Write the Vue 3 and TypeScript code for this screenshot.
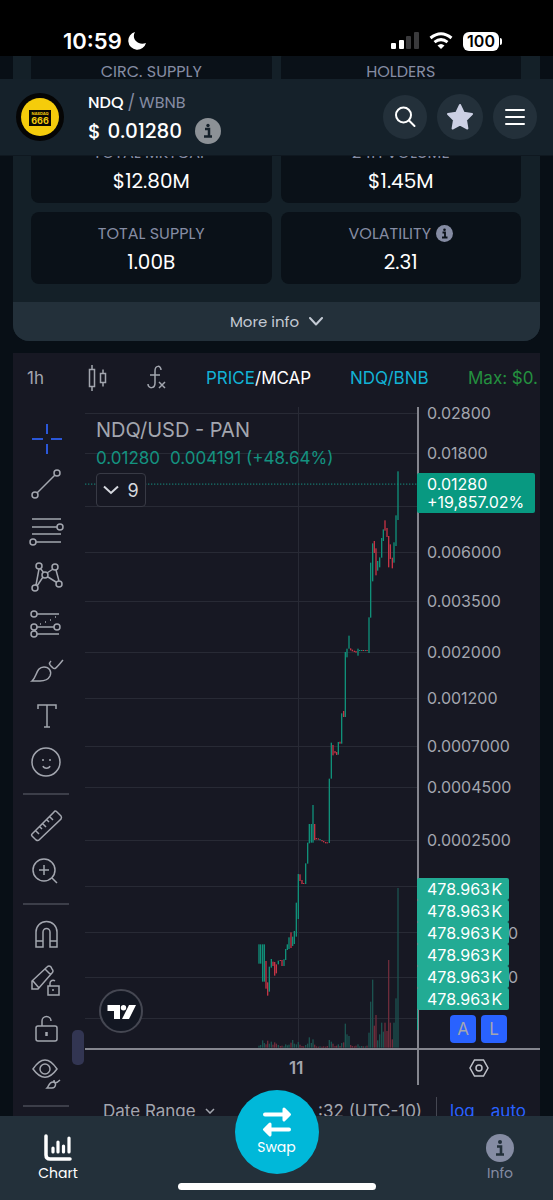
<script setup lang="ts">
import { computed, ref } from 'vue'

type Bar = [x: number, top: number, bottom: number, down?: 1]

const mode = ref<'price' | 'mcap'>('price')

const stats = [
  { label: 'CIRC. SUPPLY', value: '', info: false },
  { label: 'HOLDERS', value: '', info: false },
  { label: 'TOTAL MKTCAP', value: '$12.80M', info: false },
  { label: '24H VOLUME', value: '$1.45M', info: false },
  { label: 'TOTAL SUPPLY', value: '1.00B', info: false },
  { label: 'VOLATILITY', value: '2.31', info: true },
]

const gridY = [413, 453, 506, 552, 601, 652, 698, 746, 787, 840, 886, 932, 977, 1018].map((y) => y - 407)

const axisLabels = [
  { y: 413, text: '0.02800' },
  { y: 453, text: '0.01800' },
  { y: 552, text: '0.006000' },
  { y: 601, text: '0.003500' },
  { y: 652, text: '0.002000' },
  { y: 698, text: '0.001200' },
  { y: 746, text: '0.0007000' },
  { y: 787, text: '0.0004500' },
  { y: 840, text: '0.0002500' },
].map((l) => ({ ...l, y: l.y - 401 }))

// Last digits of the long labels that stick out beside the volume tags.
const coveredLabels = [532, 576]

const volumeTags = [0, 1, 2, 3, 4, 5].map((i) => 471 + i * 22)

const bars: Bar[] = [
  [57, 1612, 1670], [62, 1612, 1670], [68, 1612, 1724], [73, 1612, 1724], [78, 1662, 1745, 1],
  [83, 1726, 1766, 1], [88, 1679, 1754], [94, 1656, 1682], [99, 1664, 1677, 1], [104, 1665, 1706, 1],
  [109, 1672, 1699, 1], [115, 1661, 1672], [121, 1659, 1662, 1], [126, 1659, 1677, 1], [132, 1657, 1677],
  [137, 1626, 1659], [142, 1612, 1629], [147, 1591, 1626], [153, 1576, 1623, 1], [158, 1589, 1617],
  [163, 1572, 1611], [169, 1487, 1589], [175, 1401, 1536], [180, 1402, 1422, 1], [186, 1419, 1431, 1],
  [191, 1428, 1431, 1], [197, 1369, 1431], [203, 1307, 1370], [208, 1251, 1309], [214, 1251, 1307],
  [219, 1194, 1307], [224, 1251, 1299, 1], [229, 1293, 1297, 1], [235, 1294, 1298, 1], [240, 1296, 1300],
  [246, 1299, 1303, 1], [251, 1302, 1306, 1], [257, 1305, 1309, 1], [262, 1306, 1309, 1], [268, 1115, 1308],
  [274, 1007, 1115], [279, 1014, 1045, 1], [285, 1032, 1039, 1], [290, 1035, 1044, 1], [295, 1005, 1043],
  [300, 1004, 1010, 1], [305, 919, 1010], [311, 912, 930, 1], [316, 735, 930], [321, 725, 751],
  [327, 686, 725], [332, 724, 730, 1], [337, 728, 733, 1], [343, 731, 735, 1], [348, 732, 737, 1],
  [354, 725, 746], [359, 729, 732], [365, 729, 732], [370, 729, 732, 1], [376, 729, 732],
  [381, 729, 732, 1], [387, 631, 738], [392, 467, 632], [398, 409, 523], [403, 402, 438, 1],
  [408, 424, 505, 1], [413, 462, 491], [419, 451, 481], [425, 393, 452], [430, 367, 402],
  [435, 340, 371, 1], [441, 363, 390, 1], [446, 387, 481, 1], [451, 412, 456, 1], [457, 452, 484, 1],
  [462, 406, 467], [468, 325, 417], [474, 193, 339],
]

const volumes = [
  6, 8, 22, 14, 10, 21, 12, 18, 9, 16, 12, 8, 5, 6, 4, 10, 7, 9, 15, 23, 12, 10, 17, 9, 5, 4, 8, 12, 31, 14, 25, 9,
  4, 3, 4, 3, 4, 3, 5, 23, 18, 12, 5, 6, 10, 5, 14, 16, 72, 40, 35, 8, 5, 4, 6, 10, 4, 5, 4, 4, 6, 45, 138, 204,
  66, 98, 22, 40, 75, 48, 75, 50, 263, 75, 25, 75, 148, 479,
]

const volumeBars = computed(() =>
  bars.map((b, i) => ({ x: b[0] + 463, y: 1922 - volumes[i], h: volumes[i], down: b[3] === 1 })),
)
const candleBars = computed(() =>
  bars.map((b) => ({ x: b[0] + 463, y: b[1], h: b[2] - b[1], down: b[3] === 1 })),
)

const toolGroups = [
  [
    { name: 'Crosshair', active: true, d: 'M24 8v10M24 28v10M9 23h11M28 23h11' },
    { name: 'Trend line', d: 'M14 31L32 13M9 33a3 3 0 1 0 6 0a3 3 0 1 0-6 0M31 11a3 3 0 1 0 6 0a3 3 0 1 0-6 0' },
    { name: 'Fib retracement', d: 'M9 11h29M9 19h25M9 26h29M13 34h25M34 19a3 3 0 1 0 6 0a3 3 0 1 0-6 0M7 34a3 3 0 1 0 6 0a3 3 0 1 0-6 0' },
    { name: 'Patterns', d: 'M13 31L16 15M17 14L21 19M24 19L30 15M33 16L36 27M33 28L25 23M20 23L14 32M13 12a3 3 0 1 0 6 0a3 3 0 1 0-6 0M29 13a3 3 0 1 0 6 0a3 3 0 1 0-6 0M19 21a3 3 0 1 0 6 0a3 3 0 1 0-6 0M9 34a3 3 0 1 0 6 0a3 3 0 1 0-6 0M33 30a3 3 0 1 0 6 0a3 3 0 1 0-6 0' },
    { name: 'Forecast', d: 'M14 14h22M14 27h17M14 34h22M8 14a3 3 0 1 0 6 0a3 3 0 1 0-6 0M8 27a3 3 0 1 0 6 0a3 3 0 1 0-6 0M31 27a3 3 0 1 0 6 0a3 3 0 1 0-6 0M8 34a3 3 0 1 0 6 0a3 3 0 1 0-6 0M17 24h1M22 22h1M27 20h1M32 17h1' },
    { name: 'Brush', d: 'M9 35C14 31 13 21 21 21C26 21 29 25 27 30C25 34 21 35 17 35ZM28 15C25 18 27 19 30 22C32 24 34 21 40 14' },
    { name: 'Text', d: 'M15 17v-4h18v4M24 13v22M21 35h6' },
    { name: 'Icons', d: 'M9 24a14 14 0 1 0 28 0a14 14 0 1 0-28 0M20 21v2M27 21v2M20 28c1 3 6 3 7 0' },
  ],
  [
    { name: 'Measure', d: 'M9 32L31 10Q32 8 34 10L38 14Q39 15 38 17L16 38Q15 39 13 38L9 34Q8 33 9 32ZM13 29l3 3M17 25l2 2M20 22l3 3M24 18l2 2M27 15l3 3' },
    { name: 'Zoom in', d: 'M10 22a11 11 0 1 0 22 0a11 11 0 1 0-22 0M29 30l5 5M21 17v10M16 22h10' },
  ],
  [
    { name: 'Magnet', d: 'M13 35V20a10 10 0 0 1 21 0v15h-7V20a3 3 0 0 0-7 0v15ZM13 29h7M27 29h7' },
    { name: 'Stay in drawing mode', d: 'M9 31v-8L24 9Q26 7 28 9L29 11Q31 13 29 15L15 31ZM10 23l6 7M22 11l6 6M25 28h11v9H25ZM27 28v-3a3 3 0 0 1 5-2M30 31v2' },
    { name: 'Lock drawings', d: 'M15 22h17q2 0 2 2v11q0 2-2 2H15q-2 0-2-2V24q0-2 2-2M19 22v-5a4 4 0 0 1 9 0M23 28v4M24 28v4' },
    { name: 'Hide drawings', d: 'M10 19C18 7 26 7 34 19C26 30 18 30 10 19ZM17 19a5 5 0 1 0 10 0a5 5 0 1 0-10 0M24 38c2-2 2-6 6-6s3 6-1 6ZM31 30c0 3 2 4 6 0' },
  ],
]
</script>

<template>
  <div class="page">
    <div class="statusbar">
      <div class="clock">
        <span>10:59</span>
        <svg width="18" height="18" viewBox="0 0 18 18"><path d="M7 0C3 7 10 14 18 11A9 9 0 1 1 7 0Z" fill="#fff" /></svg>
      </div>
      <div class="phone-state">
        <svg width="28" height="18" viewBox="0 0 28 18">
          <rect x="0" y="11" width="5" height="6" rx="1" fill="#fff" />
          <rect x="8" y="8" width="5" height="9" rx="1" fill="#fff" />
          <rect x="15" y="4" width="5" height="13" rx="1" fill="#3a3a3c" />
          <rect x="23" y="0" width="5" height="17" rx="1" fill="#3a3a3c" />
        </svg>
        <svg width="24" height="18" viewBox="0 0 24 18" fill="none" stroke="#fff" stroke-width="3">
          <path d="M1.500 6Q12-2.500 22.500 6M5.500 10.200Q12 5 18.500 10.200" />
          <path d="M12 17L8.500 13.500Q12 10.500 15.500 13.500Z" fill="#fff" stroke="none" />
        </svg>
        <span class="battery">100</span>
      </div>
    </div>

    <header class="header">
      <svg class="coin" width="48" height="48" viewBox="0 0 48 48">
        <circle cx="24" cy="24" r="24" fill="#050505" />
        <circle cx="24" cy="24" r="19" fill="#f5cc0b" />
        <rect x="13" y="17" width="22" height="16" fill="#0b0a04" />
        <text x="24" y="22" text-anchor="middle" class="coin-small">NASDAQ</text>
        <text x="24" y="31" text-anchor="middle" class="coin-big">666</text>
      </svg>
      <div class="pair">
        <div class="pair-name"><strong>NDQ</strong><span class="slash">/</span><span>WBNB</span></div>
        <div class="pair-price">
          <span>$&nbsp;&hairsp;0.01280</span>
          <button class="bare" aria-label="Price info">
            <svg width="26" height="26" viewBox="0 0 26 26"><circle cx="13" cy="13" r="13" fill="#8c9196" /><path d="M10 11h4v7M9 18.500h8" fill="none" stroke="#15212a" stroke-width="2.500" /><circle cx="13" cy="7.500" r="1.700" fill="#15212a" /></svg>
          </button>
        </div>
      </div>
      <div class="actions">
        <button class="round" aria-label="Search">
          <svg width="24" height="24" viewBox="0 0 24 24" fill="none" stroke="#fff" stroke-width="2"><circle cx="10.500" cy="10" r="7.500" /><path d="M16 15.500L21.500 21" stroke-linecap="round" /></svg>
        </button>
        <button class="round large" aria-label="Favourite">
          <svg width="28" height="28" viewBox="0 0 28 28"><path d="M14 2L17.700 9.700L26 11L20 17L21.400 25.500L14 21.600L6.600 25.500L8 17L2 11L10.300 9.700Z" fill="#ccd0e4" stroke="#ccd0e4" stroke-width="2" stroke-linejoin="round" /></svg>
        </button>
        <button class="round" aria-label="Menu">
          <svg width="20" height="18" viewBox="0 0 20 18" stroke="#fff" stroke-width="2" stroke-linecap="round"><path d="M1 2h18M1 9h18M1 16h18" /></svg>
        </button>
      </div>
    </header>

    <main class="content">
      <section class="info-panel">
        <div class="stats">
          <div v-for="s in stats" :key="s.label" class="stat">
            <div class="stat-label">
              {{ s.label }}
              <svg v-if="s.info" width="17" height="17" viewBox="0 0 17 17"><circle cx="8.500" cy="8.500" r="8.500" fill="#858ca3" /><path d="M6.500 7.500h2.500v4.500M6 12.500h5.500" fill="none" stroke="#0a1118" stroke-width="1.800" /><circle cx="8.500" cy="4.700" r="1.300" fill="#0a1118" /></svg>
            </div>
            <div v-if="s.value" class="stat-value">{{ s.value }}</div>
          </div>
        </div>
        <button class="more">
          More info
          <svg width="14" height="9" viewBox="0 0 14 9" fill="none" stroke="#c3cad4" stroke-width="2" stroke-linecap="round" stroke-linejoin="round"><path d="M1 1L7 7.500L13 1" /></svg>
        </button>
      </section>

      <section class="chart-panel">
        <div class="toolbar">
          <button class="bare interval">1h</button>
          <button class="bare candle-button" aria-label="Chart type">
            <svg width="20" height="28" viewBox="0 0 20 28" fill="none" stroke="#a3a6af" stroke-width="1.500"><path d="M2.500 5.500h5v17h-5ZM5 1v4.500M5 22.500V27M13.500 9.500h5v9h-5ZM16 5.500v4M16 18.500v4" /></svg>
          </button>
          <button class="bare fx-button" aria-label="Indicators">
            <svg width="20" height="26" viewBox="0 0 20 26" fill="none" stroke="#a3a6af" stroke-width="1.500"><path d="M14 5C14 0 8 0 8 6V18C8 24 1 24 1 19M3 10h10M12 17l6 6M18 17l-6 6" /></svg>
          </button>
          <button class="bare mode" @click="mode = mode === 'price' ? 'mcap' : 'price'">
            <span :class="{ on: mode === 'price' }">PRICE</span>/<span :class="{ on: mode === 'mcap' }">MCAP</span>
          </button>
          <button class="bare quote">NDQ/BNB</button>
          <span class="max">Max: $0.</span>
        </div>

        <div class="workspace">
          <div class="tools">
            <div v-for="(group, g) in toolGroups" :key="g" class="tool-group">
              <button v-for="t in group" :key="t.name" class="bare tool" :class="{ active: 'active' in t }" :aria-label="t.name">
                <svg width="46" height="46" viewBox="0 0 46 46"><path :d="t.d" /></svg>
              </button>
            </div>
          </div>

          <div class="chart">
            <div class="plot-row">
              <div class="plot">
                <svg class="plot-svg" viewBox="0 0 996 1923" preserveAspectRatio="none">
                  <g fill="#282a35">
                    <rect v-for="y in gridY" :key="y" x="0" :y="y * 3" width="996" height="3" />
                    <rect x="639" y="0" width="3" height="1923" />
                  </g>
                  <rect v-for="(b, i) in volumeBars" :key="'v' + i" :x="b.x" :y="b.y" width="4" :height="b.h" :fill="b.down ? '#6d2c3b' : '#1b524f'" />
                  <path d="M0 231.500H996" stroke="#16756c" stroke-width="4" stroke-dasharray="4 5" />
                  <rect v-for="(b, i) in candleBars" :key="'c' + i" :x="b.x" :y="b.y" width="4" :height="b.h" :fill="b.down ? '#c53445' : '#109079'" />
                </svg>
                <div class="legend">
                  <div class="legend-title">NDQ/USD - PAN</div>
                  <div class="legend-values"><span>0.01280</span><span>0.004191 (+48.64%)</span></div>
                  <button class="collapse">
                    <svg width="16" height="10" viewBox="0 0 16 10" fill="none" stroke="#d5d7de" stroke-width="2"><path d="M1 1.500L8 8L15 1.500" /></svg>
                    9
                  </button>
                </div>
                <svg class="brand" width="44" height="44" viewBox="0 0 44 44">
                  <circle cx="22" cy="22" r="21" fill="#131722" stroke="#454752" stroke-width="2" />
                  <path d="M8.500 16h12.500v14h-6v-8h-6.500ZM30 16h7l-7 14h-7Z" fill="#fff" />
                  <circle cx="24.500" cy="18.700" r="2.700" fill="#fff" />
                </svg>
              </div>
              <div class="price-axis">
                <svg class="axis-svg" width="100%" height="641">
                  <text v-for="l in axisLabels" :key="l.y" x="8" :y="l.y" class="axis-text">{{ l.text }}</text>
                  <text v-for="y in coveredLabels" :key="y" x="99" :y="y" text-anchor="end" class="axis-text">0</text>
                  <rect x="-2" y="66" width="118" height="40" rx="2" fill="#089981" />
                  <text x="8" y="83" class="axis-text light">0.01280</text>
                  <text x="8" y="101" class="axis-text light">+19,857.02%</text>
                  <g v-for="y in volumeTags" :key="y">
                    <rect x="-2" :y="y" width="92" height="22" rx="2" fill="#22ab94" />
                    <text x="8" :y="y + 17" class="axis-text light">478.963&hairsp;K</text>
                  </g>
                  <rect x="-2" y="603" width="1" height="20" fill="#22ab94" />
                </svg>
                <div class="scale-buttons">
                  <button>A</button>
                  <button>L</button>
                </div>
              </div>
            </div>
            <div class="time-row">
              <div class="time-axis"><span>11</span></div>
              <div class="axis-corner">
                <button class="bare" aria-label="Chart settings">
                  <svg width="20" height="18" viewBox="0 0 20 18" fill="none" stroke="#bfc1c9" stroke-width="1.500"><path d="M5.500 1h9L19 9L14.500 17h-9L1 9Z" /><circle cx="10" cy="9" r="3" /></svg>
                </button>
              </div>
            </div>
            <div class="range-row">
              <button class="bare range">
                Date Range
                <svg width="10" height="6" viewBox="0 0 10 6" fill="none" stroke="#a3a6af" stroke-width="1.500"><path d="M1 1L5 5L9 1" /></svg>
              </button>
              <span class="utc">:32 (UTC-10)</span>
              <span class="divider"></span>
              <button class="bare blue">log</button>
              <button class="bare blue">auto</button>
            </div>
            <div class="handle"></div>
          </div>
        </div>
      </section>
    </main>

    <nav class="nav">
      <a href="#chart" class="nav-item current">
        <svg width="28" height="28" viewBox="0 0 28 28" fill="none" stroke="#fff" stroke-linecap="round" stroke-linejoin="round"><path d="M2 2V21Q2 25 6 25H26" stroke-width="3.500" /><path d="M9 14v4M14 8v10M19.500 12v6M25 4v14" stroke-width="3.200" /></svg>
        <span>Chart</span>
      </a>
      <a href="#info" class="nav-item">
        <svg width="28" height="28" viewBox="0 0 28 28"><circle cx="14" cy="14" r="14" fill="#858ca3" /><path d="M11 12.500h4v8M10 20.500h8" fill="none" stroke="#23303a" stroke-width="2.600" /><circle cx="14" cy="8" r="2" fill="#23303a" /></svg>
        <span>Info</span>
      </a>
      <button class="swap">
        <svg width="30" height="30" viewBox="0 0 30 30" fill="#fff" stroke="#fff" stroke-width="4" stroke-linecap="round" stroke-linejoin="round"><path d="M3 7.500h20" /><path d="M22 2L27.500 7.500L22 13Z" stroke-width="3" /><path d="M27 22.500H7" /><path d="M8 17L2.500 22.500L8 28Z" stroke-width="3" /></svg>
        Swap
      </button>
      <div class="home-bar"></div>
    </nav>
  </div>
</template>

<style>
body {
  background: #080f16;
}
</style>

<style scoped>
* {
  box-sizing: border-box;
}
.page {
  min-height: 100vh;
  background: #080f16;
  color: #fff;
  font-family: Poppins, Inter, "Liberation Sans", sans-serif;
  overflow-x: hidden;
}
svg {
  display: block;
  flex: none;
}
button {
  font: inherit;
  color: inherit;
  border: 0;
  padding: 0;
  cursor: pointer;
}
.bare {
  background: none;
}
.statusbar {
  position: fixed;
  inset: 0 0 auto;
  z-index: 3;
  height: 56px;
  padding: 25px 54px 0 63px;
  display: flex;
  justify-content: space-between;
  background: #000;
}
.clock {
  height: 32px;
  display: flex;
  align-items: center;
  gap: 6px;
  font: 600 22px Inter, "Liberation Sans", sans-serif;
}
.phone-state {
  height: 32px;
  display: flex;
  align-items: center;
  gap: 10px;
}
.battery {
  position: relative;
  width: 36px;
  height: 19px;
  border-radius: 6px;
  background: #fff;
  color: #000;
  text-align: center;
  font: 600 16px/19px Inter, "Liberation Sans", sans-serif;
}
.battery::after {
  content: "";
  position: absolute;
  top: 6px;
  right: -3px;
  width: 2px;
  height: 7px;
  border-radius: 0 2px 2px 0;
  background: #fff;
}
.header {
  position: fixed;
  inset: 79px 0 auto;
  z-index: 2;
  height: 77px;
  padding: 0 16px 0 16px;
  display: flex;
  align-items: center;
  background: #15212a;
  border-bottom: 1px solid #0f1820;
}
.coin-small {
  font: 700 4px Inter, sans-serif;
  fill: #f5cc0b;
}
.coin-big {
  font: 700 9px Inter, sans-serif;
  fill: #f5cc0b;
}
.pair {
  margin-left: 24px;
}
.pair-name {
  display: flex;
  gap: 4px;
  font-size: 16px;
  line-height: 28px;
  color: #858ca3;
}
.pair-name strong {
  color: #fff;
  font-weight: 500;
}
.pair-price {
  display: flex;
  align-items: center;
  gap: 13px;
  font-size: 20px;
  line-height: 28px;
  font-weight: 500;
}
.actions {
  margin-left: auto;
  display: flex;
  align-items: center;
  gap: 10px;
}
.round {
  width: 44px;
  height: 44px;
  border-radius: 50%;
  background: #23303a;
  display: grid;
  place-items: center;
}
.round.large {
  width: 46px;
  height: 46px;
}
.content {
  padding: 32px 13px 0;
}
.info-panel {
  background: #142028;
  border-radius: 16px;
  overflow: hidden;
}
.stats {
  padding: 18px 19px 18px 18px;
  display: grid;
  grid-template-columns: 1fr 1fr;
  gap: 9px;
}
.stat {
  height: 72px;
  padding-top: 9px;
  border-radius: 8px;
  background: #0a1118;
  text-align: center;
}
.stat-label {
  display: flex;
  justify-content: center;
  align-items: center;
  gap: 5px;
  height: 24px;
  font-size: 16px;
  color: #858ca3;
}
.stat-value {
  font-size: 20px;
  line-height: 34px;
}
.more {
  width: 100%;
  height: 39px;
  display: flex;
  align-items: center;
  justify-content: center;
  gap: 10px;
  background: #23303a;
  color: #c3cad4;
  font-size: 15px;
}
.chart-panel {
  margin-top: 12px;
  background: #171823;
  color: #a3a6af;
  font: 400 16px Inter, "Liberation Sans", sans-serif;
  overflow: hidden;
}
.toolbar {
  height: 54px;
  padding: 0 0 4px 14px;
  display: flex;
  align-items: center;
  white-space: nowrap;
  font-size: 17px;
}
.interval {
  width: 60px;
  text-align: left;
}
.candle-button {
  width: 60px;
}
.fx-button {
  width: 59px;
}
.mode {
  width: 144px;
  text-align: left;
  color: #fff;
}
.mode .on,
.quote {
  color: #12b2d5;
}
.quote {
  width: 118px;
  text-align: left;
}
.max {
  color: #24903f;
}
.mode,
.quote,
.interval,
.candle-button,
.fx-button,
.max {
  flex: none;
}
.workspace {
  display: flex;
}
.tools {
  width: 72px;
  padding: 9px 0 0 10px;
}
.tool-group {
  width: 46px;
}
.tool-group::after {
  content: "";
  display: block;
  height: 2px;
  margin: 9px 0 7px;
  background: #3c3e49;
}
.tool {
  display: block;
}
.tool path {
  fill: none;
  stroke: #a3a6af;
  stroke-width: 1.5;
}
.tool.active path {
  stroke: #2b57d8;
  stroke-width: 2;
}
.chart {
  position: relative;
  flex: 1;
  min-width: 0;
}
.plot-row {
  display: flex;
}
.plot {
  position: relative;
  flex: 1;
  min-width: 0;
}
.plot-svg {
  width: 100%;
  height: 641px;
}
.legend {
  position: absolute;
  top: 10px;
  left: 11px;
}
.legend-title {
  font-size: 20px;
  line-height: 26px;
}
.legend-values {
  display: flex;
  gap: 10px;
  font-size: 17px;
  line-height: 30px;
  color: #149280;
}
.collapse {
  width: 50px;
  height: 34px;
  display: flex;
  align-items: center;
  justify-content: center;
  gap: 8px;
  border: 1px solid #383a45;
  border-radius: 4px;
  background: #171823;
  color: #d5d7de;
  font-size: 18px;
}
.brand {
  position: absolute;
  left: 14px;
  bottom: 15px;
}
.price-axis {
  position: relative;
  width: 123px;
  border-left: 2px solid #85868f;
}
.axis-svg {
  overflow: visible;
}
.axis-text {
  font: 400 16px Inter, "Liberation Sans", sans-serif;
  fill: #a3a6af;
}
.axis-text.light {
  fill: #fff;
}
.scale-buttons {
  position: absolute;
  left: 31px;
  bottom: 5px;
  display: flex;
  gap: 5px;
}
.scale-buttons button {
  width: 26px;
  height: 28px;
  border-radius: 4px;
  background: #2962ff;
  color: #a3a6af;
  font-size: 17px;
}
.time-row {
  display: flex;
  height: 42px;
  border-top: 2px solid #85868f;
}
.time-axis {
  flex: 1;
  padding: 7px 0 0 204px;
  font-size: 17px;
  font-weight: 600;
  line-height: 22px;
}
.axis-corner {
  width: 123px;
  height: 35px;
  padding-left: 50px;
  border-left: 2px solid #85868f;
  display: flex;
  align-items: center;
}
.range-row {
  display: flex;
  align-items: center;
  height: 42px;
  padding: 0 14px 0 18px;
  font-size: 17px;
}
.range {
  display: flex;
  align-items: center;
  gap: 9px;
}
.utc {
  margin-left: auto;
}
.divider {
  width: 1px;
  height: 28px;
  margin: 0 13px 0 14px;
  background: #454752;
}
.blue {
  color: #2962ff;
}
.blue + .blue {
  margin-left: 16px;
}
.handle {
  position: absolute;
  left: -13px;
  top: 623px;
  width: 12px;
  height: 35px;
  border-radius: 5px;
  background: #323552;
}
.nav {
  position: fixed;
  inset: auto 0 0;
  z-index: 2;
  height: 84px;
  padding: 18px 31px 0 36px;
  display: flex;
  justify-content: space-between;
  background: #23303a;
}
.nav-item {
  width: 44px;
  display: flex;
  flex-direction: column;
  align-items: center;
  color: #858ca3;
  font-size: 14px;
  line-height: 22px;
  text-decoration: none;
}
.nav-item.current {
  color: #fff;
}
.swap {
  position: absolute;
  top: -26px;
  left: calc(50% - 42px);
  width: 84px;
  height: 84px;
  border-radius: 50%;
  background: #00b8d9;
  display: flex;
  flex-direction: column;
  align-items: center;
  justify-content: center;
  font-size: 14px;
  line-height: 20px;
}
.home-bar {
  position: absolute;
  left: calc(50% - 99px);
  bottom: 10px;
  width: 198px;
  height: 7px;
  border-radius: 4px;
  background: #fff;
}
</style>
